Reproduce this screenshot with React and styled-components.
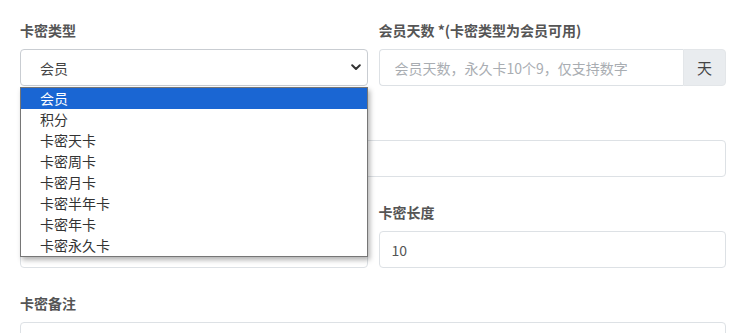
import React from "react";
import styled, { createGlobalStyle } from "styled-components";

const Global = createGlobalStyle`
  html, body { margin: 0; padding: 0; background: #fff; overflow: hidden; }
  body { font-family: "Liberation Sans", "Noto Sans CJK SC", sans-serif; font-size: 14px; color: #555; }
  * { box-sizing: border-box; }
`;

const Form = styled.div`
  width: 726px;
  padding: 20px 0 0 20px;
  display: grid;
  grid-template-columns: 1fr 1fr;
  column-gap: 11px;
  row-gap: 25px;
`;

const Field = styled.div`
  position: relative;
  z-index: ${(p) => (p.$raised ? 5 : "auto")};
  grid-column: ${(p) => (p.$full ? "1 / span 2" : "auto")};
  display: flex;
  flex-direction: column;
`;

const Label = styled.div`
  font-weight: bold;
  font-size: 14px;
  line-height: 20px;
  height: 20px;
  color: #555;
  margin-bottom: 9px;
  font-family: "Noto Sans CJK SC", "Liberation Sans", sans-serif;
  visibility: ${(p) => (p.$covered ? "hidden" : "visible")};
`;

const Control = styled.div`
  position: relative;
  height: 37px;
  border: 1px solid #dde1e5;
  border-radius: 4px;
  background: #fff;
  display: flex;
  align-items: center;
  padding-left: ${(p) => p.$pad || 12}px;
  font-size: 14px;
  color: ${(p) => (p.$placeholder ? "#a9adb2" : "#555")};
  font-family: "Noto Sans CJK SC", "Liberation Sans", sans-serif;
`;

const SelectWrap = styled.div`
  position: relative;
`;

const SelectBox = styled(Control)`
  border-color: #c9cdd2;
  color: #444;
  justify-content: space-between;
  padding-right: 6px;
`;

const Group = styled.div`
  display: flex;
  height: 37px;
`;

const GroupInput = styled(Control)`
  flex: 1;
  border-radius: 4px 0 0 4px;
  border-right: none;
`;

const Append = styled.div`
  width: 43px;
  background: #e9ecef;
  border: 1px solid #e3e6e9;
  border-radius: 0 4px 4px 0;
  display: flex;
  align-items: center;
  justify-content: center;
  color: #444;
  font-size: 15px;
  font-family: "Noto Sans CJK SC", sans-serif;
`;

const Menu = styled.ul`
  position: absolute;
  left: 0;
  right: 0;
  top: calc(100% + 1px);
  margin: 0;
  padding: 0;
  list-style: none;
  background: #fff;
  border: 1px solid #767676;
  box-shadow: 2px 3px 5px rgba(0, 0, 0, 0.3);
  z-index: 10;
`;

const Option = styled.li`
  height: 21px;
  line-height: 21px;
  padding-left: 19px;
  font-size: 14px;
  font-family: "Noto Sans CJK SC", sans-serif;
  color: ${(p) => (p.$active ? "#fff" : "#333")};
  background: ${(p) => (p.$active ? "#1a66d3" : "#fff")};
`;

const Chevron = () => (
  <svg width="10" height="7" viewBox="0 0 10 7">
    <path d="M1.2 1.3 L5 5 L8.8 1.3" fill="none" stroke="#333" strokeWidth="2" strokeLinecap="round" strokeLinejoin="round" />
  </svg>
);

const options = ["会员", "积分", "卡密天卡", "卡密周卡", "卡密月卡", "卡密半年卡", "卡密年卡", "卡密永久卡"];

export default function App() {
  return (
    <>
      <Global />
      <Form>
        <Field $raised>
          <Label>卡密类型</Label>
          <SelectWrap>
            <SelectBox $pad={19}>
              <span>会员</span>
              <Chevron />
            </SelectBox>
            <Menu>
              {options.map((o, i) => (
                <Option key={o} $active={i === 0}>{o}</Option>
              ))}
            </Menu>
          </SelectWrap>
        </Field>
        <Field>
          <Label>会员天数 *(卡密类型为会员可用)</Label>
          <Group>
            <GroupInput $placeholder $pad={15}>会员天数，永久卡10个9，仅支持数字</GroupInput>
            <Append>天</Append>
          </Group>
        </Field>
        <Field $full>
          <Label $covered>卡密前缀</Label>
          <Control />
        </Field>
        <Field>
          <Label $covered>生成数量</Label>
          <Control />
        </Field>
        <Field>
          <Label>卡密长度</Label>
          <Control>10</Control>
        </Field>
        <Field $full>
          <Label>卡密备注</Label>
          <Control />
        </Field>
      </Form>
    </>
  );
}
